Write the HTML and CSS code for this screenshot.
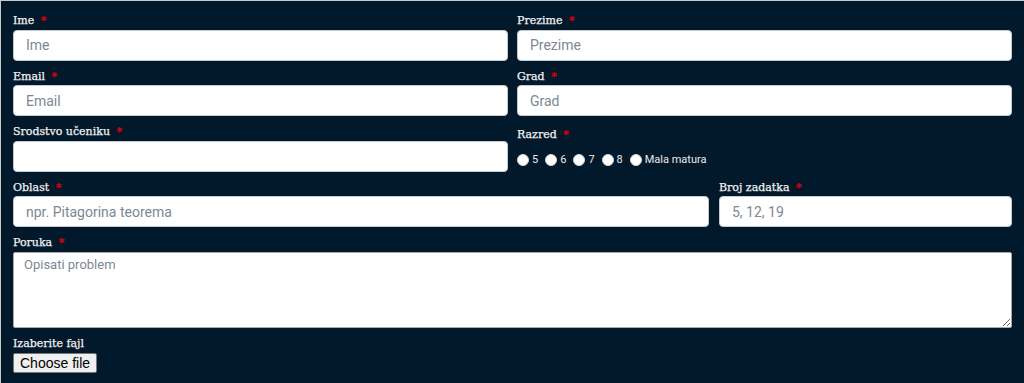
FILE: index.html
```html
<!DOCTYPE html>
<html lang="sr">
<head>
    <meta charset="UTF-8">
    <meta name="viewport" content="width=device-width, initial-scale=1.0">
    <title>Kontakt forma</title>
    <link rel="stylesheet" href="styles.css">
</head>
<body>
    <form class="contact-form">
        <div class="form-row cols-2">
            <div class="field">
                <label>Ime <span class="req">*</span></label>
                <input type="text" placeholder="Ime">
            </div>
            <div class="field">
                <label>Prezime <span class="req">*</span></label>
                <input type="text" placeholder="Prezime">
            </div>
        </div>

        <div class="form-row cols-2">
            <div class="field">
                <label>Email <span class="req">*</span></label>
                <input type="email" placeholder="Email">
            </div>
            <div class="field">
                <label>Grad <span class="req">*</span></label>
                <input type="text" placeholder="Grad">
            </div>
        </div>

        <div class="form-row cols-2">
            <div class="field">
                <label>Srodstvo učeniku <span class="req">*</span></label>
                <input type="text">
            </div>
            <div class="field">
                <label class="razred-label">Razred <span class="req">*</span></label>
                <div class="radio-group">
                    <label class="radio"><input type="radio" name="razred"> 5</label>
                    <label class="radio"><input type="radio" name="razred"> 6</label>
                    <label class="radio"><input type="radio" name="razred"> 7</label>
                    <label class="radio"><input type="radio" name="razred"> 8</label>
                    <label class="radio"><input type="radio" name="razred"> Mala matura</label>
                </div>
            </div>
        </div>

        <div class="form-row cols-wide">
            <div class="field">
                <label>Oblast <span class="req">*</span></label>
                <input type="text" placeholder="npr. Pitagorina teorema">
            </div>
            <div class="field">
                <label>Broj zadatka <span class="req">*</span></label>
                <input type="text" placeholder="5, 12, 19">
            </div>
        </div>

        <div class="form-row">
            <div class="field">
                <label>Poruka <span class="req">*</span></label>
                <textarea placeholder="Opisati problem"></textarea>
            </div>
        </div>

        <div class="form-row">
            <div class="field">
                <label>Izaberite fajl</label>
                <div><button type="button" class="file-btn">Choose file</button></div>
            </div>
        </div>
    </form>
</body>
</html>
```

FILE: styles.css
```css
html, body {
    margin: 0;
    height: 100%;
}
body {
    background-color: #c9c9c9;
    font-family: "DejaVu Serif", serif;
}
.contact-form {
    margin: 1px 0 0 1px;
    min-height: calc(100% - 1px);
    box-sizing: border-box;
    background-color: #02192c;
    padding: 4px 12px 0 12px;
}
.form-row {
    display: grid;
    grid-template-columns: 1fr;
}
.form-row.cols-2 {
    grid-template-columns: 1fr 1fr;
    column-gap: 9px;
}
.form-row.cols-wide {
    grid-template-columns: 696fr 293fr;
    column-gap: 10px;
}
.field > label {
    display: block;
    color: #f2f2f2;
    -webkit-text-stroke: 0.25px #f2f2f2;
    font-size: 11px;
    line-height: 16px;
    padding-top: 8px;
    margin-bottom: 0.5px;
}
.field > label.razred-label {
    padding-top: 11px;
}
.req {
    color: #e0000b;
    -webkit-text-stroke: 0.25px #e0000b;
    margin-left: 3px;
}
.field input[type="text"],
.field input[type="email"] {
    display: block;
    width: 100%;
    height: 31px;
    box-sizing: border-box;
    border: 1px solid #c4cad0;
    border-radius: 4px;
    padding: 0 12px;
    font-family: Roboto, sans-serif;
    font-size: 14px;
    color: #333;
    background: #fff;
}
textarea {
    display: block;
    width: 100%;
    height: 76px;
    box-sizing: border-box;
    border: 1px solid #a9a9a9;
    border-radius: 2px;
    padding: 4px 10px;
    font-family: Roboto, sans-serif;
    font-size: 13px;
    resize: vertical;
}
input::placeholder,
textarea::placeholder {
    color: #7d8893;
}
.radio-group {
    display: flex;
    align-items: center;
    padding-top: 8px;
}
.radio {
    display: flex;
    align-items: center;
    color: #ebebeb;
    font-family: Roboto, sans-serif;
    font-size: 11px;
    line-height: 16px;
    margin-right: 7px;
}
.radio input {
    appearance: none;
    width: 12px;
    height: 12px;
    margin: 0 3px 0 0;
    border-radius: 50%;
    border: 1px solid #d8d8d8;
    background: #fff;
}
.file-btn {
    margin-top: 1px;
    height: 20px;
    padding: 0 6px;
    font-family: "Liberation Sans", Arial, sans-serif;
    font-size: 14px;
    color: #000;
    background-color: #efefef;
    border: 1px solid #767676;
    border-radius: 2px;
}
```
